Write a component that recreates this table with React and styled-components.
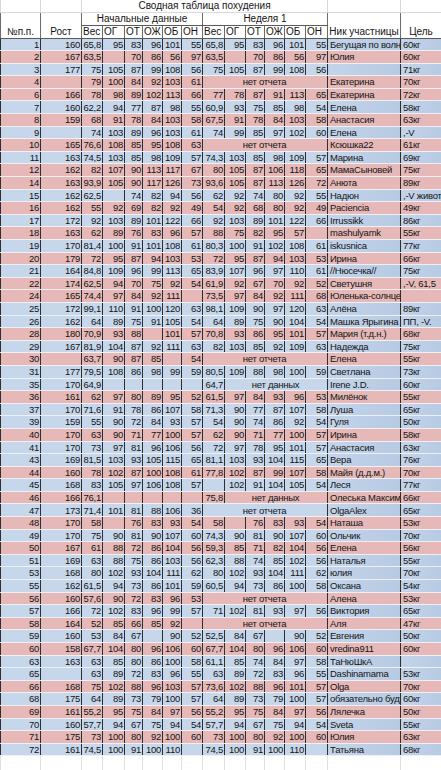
import React from 'react';
import styled, { createGlobalStyle } from 'styled-components';

const Global = createGlobalStyle`
  html, body { margin: 0; padding: 0; background: #ffffff; }
  body { font-family: "Liberation Sans", Arial, sans-serif; }
`;

const COLS = [40, 41, 21, 22, 18, 20, 19, 21, 22, 21, 19, 20, 21, 22, 73, 41];
const SUB = ['Вес', 'ОГ', 'ОТ', 'ОЖ', 'ОБ', 'ОН'];

const RAW = `1|160|65,8 95 83 96 101 55|65,8 95 83 96 101 55|Бегущая по волнам|60кг|b
2|167|63,5 _ 70 86 56 97|63,5 _ 70 86 56 97|Юлия|60кг|p
3|177|75 105 87 99 108 56|75 105 87 99 108 56||71кг|b
4||79 100 84 92 103 61|N|Екатерина|70кг|p
6|166|78 98 89 102 113 66|77 78 87 91 113 65|Екатерина|72кг|p
7|160|62,2 94 77 87 98 55|60,9 93 75 85 98 54|Елена|58кг|b
8|159|68 91 78 84 103 58|67,5 91 78 84 103 58|Анастасия|63кг|p
9||74 103 89 96 103 61|74 99 85 97 102 60|Елена|,-V|b
10|165|76,6 108 85 95 108 63|N|Ксюшка22|61кг|p
11|163|74,5 103 85 98 109 57|74,3 103 85 98 109 57|Марина|69кг|b
12|162|82 107 90 113 117 67|80 105 87 106 118 65|МамаСыновей|75кг|p
14|163|93,9 105 90 117 126 73|93,6 105 87 113 126 72|Анюта|89кг|p
15|162|62,5 _ 74 82 94 56|62 92 74 80 92 55|Надюн|,-V живот|b
16|162|55 92 69 82 92 49|54 92 68 80 92 49|Paciencia|49кг|p
17|172|92 103 89 101 122 66|92 103 89 101 122 66|Irrussikk|86кг|b
18|163|62 89 76 83 96 57|88 75 82 95 57 _|mashulyamk|55кг|p
19|170|81,4 100 91 101 108 61|80,3 100 91 102 108 61|iskusnica|77кг|b
20|179|72 95 87 94 103 53|72 95 87 94 103 53|Ирина|66кг|p
21|164|84,8 109 96 99 113 65|83,9 107 96 97 110 61|//Нюсечка//|75кг|b
22|174|62,5 94 70 75 92 54|61,9 92 67 70 92 52|Светушня|,-V, 61,5|p
24|165|74,4 97 84 92 111 _|73,5 97 84 92 111 68|Юленька-солнце||p
25|172|99,1 110 91 100 120 63|98,1 109 90 97 120 63|Алёна|89кг|b
26|162|64 89 75 91 105 54|64 89 75 90 104 54|Машка Ярыгина|ПП, -V.|b
28|180|70,9 93 88 _ 101 57|70,8 93 86 95 101 57|Мария (т.д.н.)|68кг|p
29|167|81,9 104 87 92 111 63|82 103 85 92 109 63|Надежда|75кг|b
30||63,7 90 87 85 _ 54|N|Елена|55кг|p
31|177|79,5 108 86 98 99 59|80,5 109 88 98 100 59|Светлана|73кг|b
35|170|64,9 _ _ _ _ _|D:64,7|Irene J.D.|60кг|b
36|161|62 97 80 89 95 52|61,5 97 84 93 96 53|Милёнок|55кг|p
37|170|71,6 91 78 86 107 58|71,3 90 77 87 107 58|Луша|65кг|b
39|159|55 90 72 84 93 57|54 90 74 86 92 54|Гуля|50кг|b
40|170|63 90 71 77 100 57|62 90 71 77 100 57|Ирина|58кг|p
41|170|73 97 81 96 106 56|72 97 78 95 101 57|Анастасия|63кг|b
43|169|81,5 103 93 105 115 65|81,1 103 93 104 115 65|Вера|76кг|b
44|160|78 102 87 100 108 61|77,8 102 87 99 107 58|Майя (д.д.м.)|70кг|p
45|168|83 105 97 106 108 57|_ 102 91 104 105 54|Леся|77кг|b
46|166|76,1 _ _ _ _ _|D:75,8|Олеська Максимова|66кг|p
47|173|71,4 101 81 88 106 36|N|OlgaAlex|65кг|b
48|170|58 _ 76 83 93 54|58 _ 76 83 93 54|Наташа|53кг|p
49|170|75 90 81 90 107 60|74,3 90 81 90 107 60|Ольчик|70кг|b
50|167|61 88 72 86 104 56|59,3 85 71 82 104 56|Елена|56кг|p
51|169|63 88 75 86 103 56|62,3 88 74 85 102 56|Наталья|55кг|b
53|168|80 102 93 104 111 62|80 102 93 104 111 62|юлия|70кг|b
55|162|61,5 94 73 86 101 59|60,5 94 73 86 100 58|Оксана|54кг|b
56|160|57,6 90 72 83 96 53|N|Алена|53кг|p
57|166|72 102 83 96 99 57|71 102 81 93 97 56|Виктория|65кг|b
58|164|52 85 66 85 92 _|N|Аля|47кг|p
59|160|53 84 67 _ 90 52|52,5 84 67 _ 90 52|Евгения|50кг|b
60|158|67,7 104 80 96 106 60|67,7 104 80 96 106 60|vredina911|60кг|p
63|163|63 85 80 86 100 58|61,1 85 74 84 97 58|ТаНюШкА||b
65||63 89 72 83 96 55|63 89 72 83 96 55|Dashinamama|53кг|b
66|168|75 102 88 96 103 57|73,6 102 88 96 101 57|Olga|70кг|p
68|175|64 89 73 79 100 57|64 89 73 79 100 57|обязательно буду|60кг|b
69|161|55,2 95 75 84 97 56|55,2 95 75 84 97 56|Лялечка|50кг|p
70|160|57,7 94 67 75 94 54|57,7 94 67 75 94 54|Sveta|55кг|b
71|175|73 100 80 92 100 60|73 100 80 92 100 60|Юлия|63кг|p
72|161|74,5 100 91 100 110 _|74,5 100 91 100 110 _|Татьяна|68кг|b`;

const vals = (s) => s.split(' ').map((v) => (v === '_' ? '' : v));

const ROWS = RAW.split('\n').map((line) => {
  const [num, rost, init, week, name, goal, tone] = line.split('|');
  let weekData;
  if (week === 'N') weekData = { kind: 'none' };
  else if (week.startsWith('D:')) weekData = { kind: 'nodata', ves: week.slice(2) };
  else weekData = { kind: 'vals', list: vals(week) };
  return { num, rost, init: vals(init), week: weekData, name, goal, tone };
});

const TONES = {
  b: { bg: '#c6d7ec', side: 'linear-gradient(90deg, #c3d4ea 0%, #b6cae3 100%)' },
  p: { bg: '#e6b9b8', side: '#e6b9b8' },
};

const Page = styled.div`
  width: 441px;
  height: 770px;
  overflow: hidden;
  background: #ffffff;
`;

const Sheet = styled.table`
  border-collapse: collapse;
  table-layout: fixed;
  width: 441px;
  font-size: 9.5px;
  letter-spacing: -0.25px;
  color: #141414;
  line-height: 1;
`;

const TitleRow = styled.tr`
  height: 12px;
`;

const TitleCell = styled.td`
  text-align: center;
  vertical-align: middle;
  border: 1px solid #d9d9d9;
  border-top: none;
  padding: 0;
  white-space: nowrap;
  font-size: 10px;
  letter-spacing: 0;
`;

const GroupRow = styled.tr`
  height: 13px;
`;

const SubRow = styled.tr`
  height: 13px;
`;

const HeadCell = styled.td`
  padding: 0 1px;
  white-space: nowrap;
  overflow: hidden;
  font-size: 10px;
  letter-spacing: 0;
  vertical-align: ${(p) => (p.$bottom ? 'bottom' : 'middle')};
  padding-bottom: ${(p) => (p.$bottom ? '1px' : '0')};
  text-align: ${(p) => p.$align || 'left'};
  border-left: 1px solid #6b6b6b;
  border-right: 1px solid #6b6b6b;
  border-top: 1px solid #c9c9c9;
  border-bottom: 1px solid #5a5a5a;
`;

const DataRow = styled.tr`
  height: 12.6px;
  background: ${(p) => TONES[p.$tone].bg};
`;

const Cell = styled.td`
  padding: 0 ${(p) => (p.$align === 'left' ? '0' : '1px')} 0 ${(p) => (p.$align === 'left' ? '2px' : '0')};
  text-align: ${(p) => p.$align || 'right'};
  vertical-align: middle;
  white-space: nowrap;
  overflow: hidden;
  border-left: 1px solid #2e2e2e;
  border-right: 1px solid #2e2e2e;
  border-top: 1px solid #eef0f4;
  border-bottom: 1px solid #eef0f4;
  background: ${(p) => (p.$side ? TONES[p.$side].side : 'transparent')};
`;

const BlankRow = styled.tr`
  height: 14px;
`;

const BlankCell = styled.td`
  border: 1px solid #e0e0e0;
  border-bottom: none;
`;

function WeekCells({ week }) {
  if (week.kind === 'none') {
    return (
      <Cell colSpan={6} $align="center">
        нет отчета
      </Cell>
    );
  }
  if (week.kind === 'nodata') {
    return (
      <>
        <Cell>{week.ves}</Cell>
        <Cell colSpan={5} $align="center">
          нет данных
        </Cell>
      </>
    );
  }
  return week.list.map((v, i) => <Cell key={i}>{v}</Cell>);
}

export default function App() {
  return (
    <Page>
      <Global />
      <Sheet>
        <colgroup>
          {COLS.map((w, i) => (
            <col key={i} style={{ width: w }} />
          ))}
        </colgroup>
        <thead>
          <TitleRow>
            <TitleCell />
            <TitleCell />
            <TitleCell colSpan={12}>Сводная таблица похудения</TitleCell>
            <TitleCell />
            <TitleCell />
          </TitleRow>
          <GroupRow>
            <HeadCell rowSpan={2} $bottom $align="center">№п.п.</HeadCell>
            <HeadCell rowSpan={2} $bottom $align="center">Рост</HeadCell>
            <HeadCell colSpan={6} $align="center">Начальные данные</HeadCell>
            <HeadCell colSpan={6} $align="center">Неделя 1</HeadCell>
            <HeadCell rowSpan={2} $bottom $align="center">Ник участницы</HeadCell>
            <HeadCell rowSpan={2} $bottom $align="center">Цель</HeadCell>
          </GroupRow>
          <SubRow>
            {SUB.map((s) => (
              <HeadCell key={'a' + s} $bottom>{s}</HeadCell>
            ))}
            {SUB.map((s) => (
              <HeadCell key={'b' + s} $bottom>{s}</HeadCell>
            ))}
          </SubRow>
        </thead>
        <tbody>
          {ROWS.map((r) => (
            <DataRow key={r.num} $tone={r.tone}>
              <Cell>{r.num}</Cell>
              <Cell>{r.rost}</Cell>
              {r.init.map((v, i) => (
                <Cell key={i}>{v}</Cell>
              ))}
              <WeekCells week={r.week} />
              <Cell $align="left" $side={r.tone}>{r.name}</Cell>
              <Cell $align="left" $side={r.tone}>{r.goal}</Cell>
            </DataRow>
          ))}
          <BlankRow>
            {COLS.map((w, i) => (
              <BlankCell key={i} />
            ))}
          </BlankRow>
        </tbody>
      </Sheet>
    </Page>
  );
}
